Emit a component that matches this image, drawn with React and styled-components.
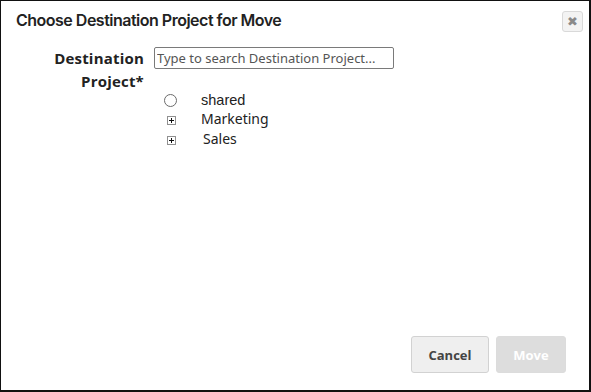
import styled, { createGlobalStyle } from "styled-components";

const GlobalStyle = createGlobalStyle`
  html, body {
    margin: 0;
    padding: 0;
    background: #ffffff;
  }
`;

const Dialog = styled.div`
  box-sizing: border-box;
  width: 591px;
  height: 392px;
  background: #ffffff;
  border: 1px solid #111;
  border-right-width: 2px;
  border-bottom-width: 2px;
  display: flex;
  flex-direction: column;
  font-family: "Open Sans", "Noto Sans", sans-serif;
`;

const Header = styled.div`
  display: flex;
  align-items: center;
  justify-content: space-between;
  padding: 8px 6px 0 15px;
  height: 22px;
`;

const Title = styled.h1`
  margin: 0;
  font-family: Inter, "Noto Sans", sans-serif;
  font-size: 16px;
  font-weight: 600;
  color: #222;
  letter-spacing: -0.5px;
`;

const CloseButton = styled.button`
  box-sizing: border-box;
  width: 21px;
  height: 21px;
  padding: 0;
  margin-top: 2px;
  border: 1px solid #d9d9d9;
  border-radius: 3px;
  background: #f3f3f3;
  color: #8a8a8a;
  font-family: "DejaVu Sans", sans-serif;
  font-size: 13px;
  font-weight: 700;
  line-height: 19px;
  text-align: center;
  cursor: pointer;
`;

const Body = styled.div`
  flex: 1;
  display: flex;
  align-items: flex-start;
  gap: 10px;
  padding: 16px 0 0 0;
`;

const Label = styled.label`
  width: 143px;
  text-align: right;
  font-size: 15px;
  font-weight: 700;
  color: #222;
  line-height: 23px;
  letter-spacing: 0.2px;
`;

const Field = styled.div`
  display: flex;
  flex-direction: column;
`;

const SearchInput = styled.input`
  box-sizing: border-box;
  width: 240px;
  height: 22px;
  margin: 0;
  padding: 0 2px;
  border: 1px solid #7a7a7a;
  border-radius: 2px;
  font-family: "Noto Sans", sans-serif;
  font-size: 13px;
  color: #222;
  outline: none;

  &::placeholder {
    color: #555;
  }
`;

const Tree = styled.ul`
  list-style: none;
  margin: 21px 0 0 0;
  padding: 0;
`;

const Node = styled.li`
  display: flex;
  align-items: center;
  height: 20px;
`;

const Marker = styled.span`
  width: 47px;
  display: flex;
  padding-left: ${(p) => (p.$radio ? "10px" : "13px")};
  box-sizing: border-box;
`;

const Radio = styled.span`
  box-sizing: border-box;
  width: 13px;
  height: 13px;
  border: 1px solid #6b6b6b;
  border-radius: 50%;
`;

const Expander = styled.span`
  box-sizing: border-box;
  width: 9px;
  height: 9px;
  border: 1px solid #909090;
  position: relative;

  &::before,
  &::after {
    content: "";
    position: absolute;
    background: #111;
  }
  &::before {
    left: 1px;
    right: 1px;
    top: 3px;
    height: 1px;
  }
  &::after {
    top: 1px;
    bottom: 1px;
    left: 3px;
    width: 1px;
  }
`;

const NodeText = styled.span`
  font-family: ${(p) => (p.$plain ? '"Liberation Sans", Arial, sans-serif' : '"Noto Sans", sans-serif')};
  font-size: ${(p) => (p.$plain ? "14.5px" : "14px")};
  color: #222;
  margin-left: ${(p) => p.$shift || 0}px;
  padding-bottom: ${(p) => (p.$plain ? "0" : "3px")};
`;

const Footer = styled.div`
  display: flex;
  justify-content: flex-end;
  gap: 7px;
  padding: 0 23px 17px 0;
`;

const Button = styled.button`
  box-sizing: border-box;
  height: 37px;
  width: ${(p) => p.$w}px;
  border: 1px solid ${(p) => (p.$disabled ? "#dcdcdc" : "#d2d2d2")};
  border-radius: 3px;
  background: ${(p) => (p.$disabled ? "#dddddd" : "#efefef")};
  color: ${(p) => (p.$disabled ? "#ffffff" : "#444")};
  font-family: "Open Sans", sans-serif;
  font-size: 13px;
  font-weight: 700;
  cursor: ${(p) => (p.$disabled ? "default" : "pointer")};
`;

const projects = [
  { name: "shared", kind: "radio" },
  { name: "Marketing", kind: "folder" },
  { name: "Sales", kind: "folder", shift: 2 },
];

export default function App() {
  return (
    <>
      <GlobalStyle />
      <Dialog>
        <Header>
          <Title>Choose Destination Project for Move</Title>
          <CloseButton>✖</CloseButton>
        </Header>
        <Body>
          <Label>
            Destination
            <br />
            Project*
          </Label>
          <Field>
            <SearchInput placeholder="Type to search Destination Project..." />
            <Tree>
              {projects.map((p) => (
                <Node key={p.name}>
                  <Marker $radio={p.kind === "radio"}>
                    {p.kind === "radio" ? <Radio /> : <Expander />}
                  </Marker>
                  <NodeText $plain={p.kind === "radio"} $shift={p.shift}>
                    {p.name}
                  </NodeText>
                </Node>
              ))}
            </Tree>
          </Field>
        </Body>
        <Footer>
          <Button $w={78}>Cancel</Button>
          <Button $w={70} $disabled>
            Move
          </Button>
        </Footer>
      </Dialog>
    </>
  );
}
